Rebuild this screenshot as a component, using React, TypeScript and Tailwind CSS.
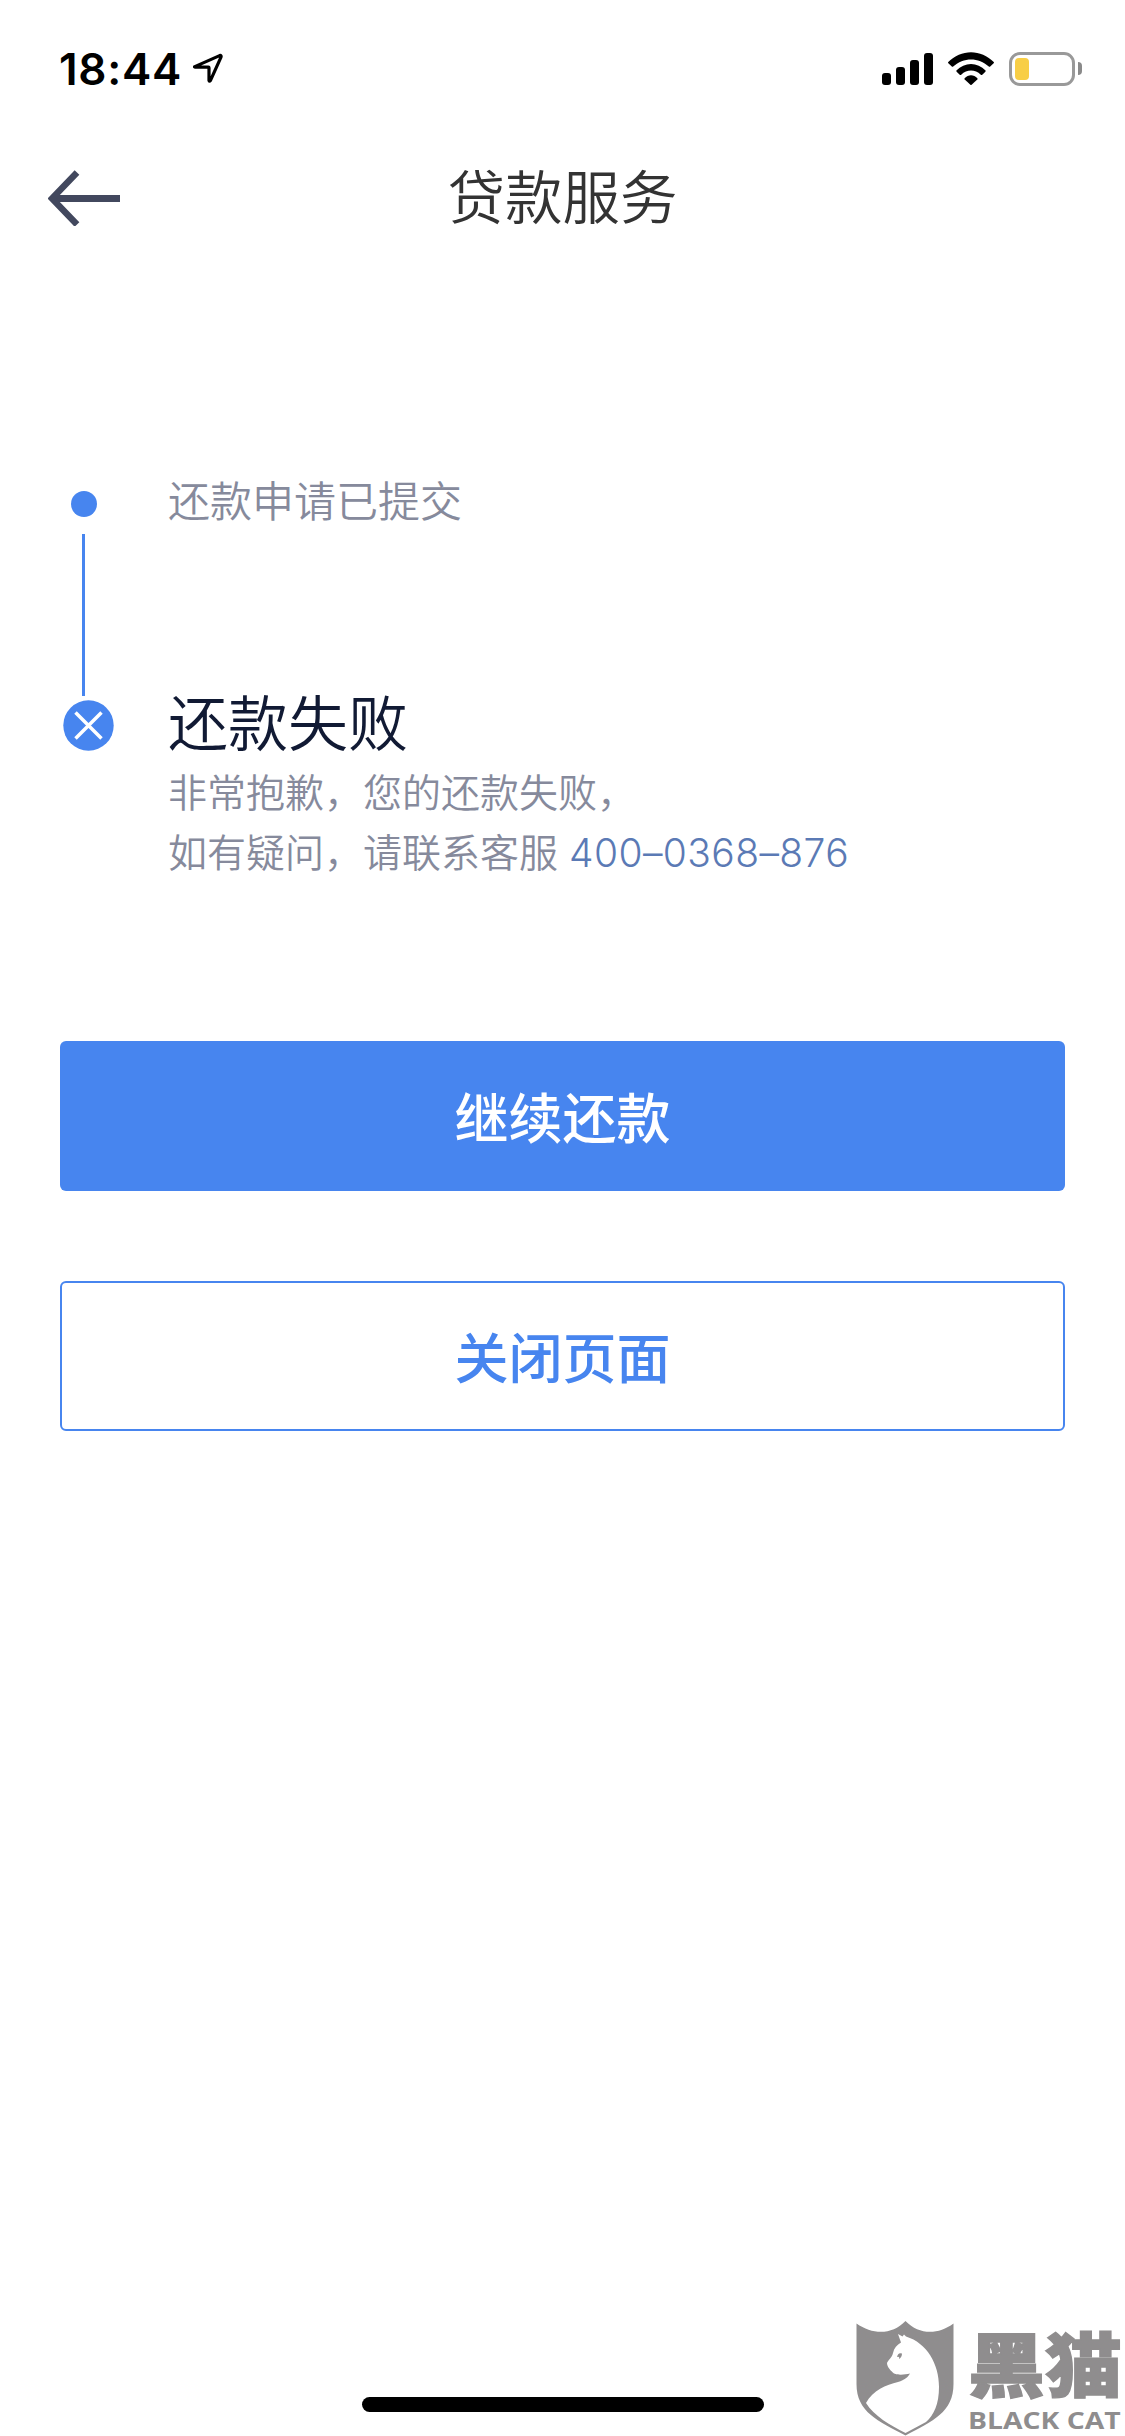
import React from "react";

function StatusBar() {
  return (
    <div className="flex h-[132px] items-start pl-[59px] pr-[43px] pt-[46px]">
      <span className="w-[134px] whitespace-nowrap font-['Inter','Liberation_Sans',sans-serif] text-[44px] font-semibold leading-[46px] tracking-[0.7px] text-black">
        18:44
      </span>
      <svg className="mt-[7px] h-[32px] w-[32px]" viewBox="0 0 32 32" fill="none">
        <path
          d="M1.8 13.6 26.6 2.6Q28.6 2 28 4.2L17.4 27.6Q16.3 29 16 27.4V14.8Q16 14.2 15.4 14.2H2.4Q1 14 1.8 13.6Z"
          stroke="#000"
          strokeWidth="3.2"
          strokeLinejoin="round"
        />
      </svg>
      <div className="ml-auto flex items-start">
        <div className="mt-[7px] flex h-[32px] items-end gap-[5px]">
          <i className="h-[12px] w-[9px] rounded-[3px] bg-black" />
          <i className="h-[18px] w-[9px] rounded-[3px] bg-black" />
          <i className="h-[25px] w-[9px] rounded-[3px] bg-black" />
          <i className="h-[32px] w-[9px] rounded-[3px] bg-black" />
        </div>
        <svg className="ml-[15px] mt-[6px] h-[34px] w-[46px]" viewBox="0 0 46 34">
          <path d="M0 10.2C13-3.2 33-3.2 46 10.2Q46 11 45.4 11.6L42.2 14.6Q41.4 15 40.8 14.6C30.5 5 15.500 5 5.200 14.600Q4.600 15 3.800 14.600L.6 11.600Q0 11 0 10.200Z" />
          <path d="M8.400 18.600C16.500 9.800 29.500 9.800 37.600 18.600Q37.800 19.200 37.400 19.700L34 22.900Q33.300 23.200 32.800 22.800C27 17.200 19 17.200 13.200 22.800Q12.700 23.200 12 22.900L8.600 19.700Q8.200 19.200 8.400 18.600Z" />
          <path d="M16.600 26.300C20.300 22.200 25.700 22.200 29.400 26.300Q29.800 26.900 29.300 27.500L23.600 32.800Q23 33.200 22.400 32.800L16.700 27.500Q16.200 26.900 16.600 26.300Z" />
        </svg>
        <div className="ml-[15px] mt-[6px] flex h-[34px] w-[66px] items-center rounded-[11px] border-[3px] border-[#999] pl-[3px]">
          <i className="h-[22px] w-[14px] rounded-[4px] bg-[#f8ce46]" />
        </div>
        <i className="ml-[3px] mt-[16px] h-[13px] w-[4px] rounded-r-full bg-[#8a8a8a]" />
      </div>
    </div>
  );
}

function Header() {
  return (
    <header className="flex h-[132px] items-center px-[48px]">
      <svg className="h-[56px] w-[72px]" viewBox="0 0 72 56" fill="none" stroke="#42485e">
        <path d="M72 28.500H7" strokeWidth="7" />
        <path d="M29 2.500 4 28.500 29 54.500" strokeWidth="6.500" />
      </svg>
      <h1 className="-mt-[8px] flex-1 pr-[72px] text-center text-[57.500px] font-[350] leading-[72px] text-[#333]">
        贷款服务
      </h1>
    </header>
  );
}

function Timeline() {
  return (
    <section className="mt-[208px] flex h-[420px] pl-[63px]">
      <div className="flex w-[105px] flex-col items-start pt-[19px]">
        <i className="ml-[8px] h-[26px] w-[26px] rounded-full bg-[#4785ef]" />
        <i className="ml-[19px] mt-[17px] h-[162px] w-[3px] bg-[#4785ef]" />
        <svg className="mt-[4px] h-[51px] w-[51px]" viewBox="0 0 51 51">
          <circle cx="25.500" cy="25.500" r="25.200" fill="#4785ef" />
          <path d="M12.500 12.500 38.500 38.500M38.500 12.500 12.500 38.500" stroke="#fff" strokeWidth="3.500" />
        </svg>
      </div>
      <div className="-mt-[3px]">
        <p className="h-[211px] text-[42px] font-[350] leading-[60px] text-[#868a9c]">还款申请已提交</p>
        <h2 className="text-[60px] font-[350] leading-[80px] text-[#111a34]">还款失败</h2>
        <p className="text-[39px] font-[350] leading-[60px] text-[#868a9c]">
          非常抱歉，您的还款失败，
          <br />
          如有疑问，请联系客服
          <span className="ml-[11px] font-['Inter','Liberation_Sans',sans-serif] text-[39px] font-[350] tracking-[0.4px] text-[#5b7ab5]">
            400–0368–876
          </span>
        </p>
      </div>
    </section>
  );
}

function Watermark() {
  return (
    <div className="absolute bottom-0 right-0 flex h-[118px] w-[270px] text-[#8f8d8e]">
      <svg className="ml-px mt-[3px] h-[115px] w-[98px]" viewBox="0 0 98 115">
        <path
          fill="#8f8d8e"
          d="M.500 2.500C17 14 36 14 49.500 0 63 14 82 14 97.500 2.500V63C97.500 91 77 100 49.500 114.500 22 100 .500 91 .500 63Z"
        />
        <path
          fill="#fff"
          d="M42 13 46.500 15.500 48 13.500 50 15.500C71 22 83 43 83 66 83 83 78 94 70 101L49.500 112C34 104 18 95 10 82 17 69 30 64 42 61 49 59 52 56 54 52.500 49 53.500 43 54.500 38 52.500 35 50 31 46 31 42 32 39 36 37 37 32 38 27 41 24 45 21.500Z"
        />
        <path fill="#8f8d8e" d="M41 36Q42 31 46 32.500 46 36 43 38Q44 35 41 36Z" />
      </svg>
      <div className="ml-[14px] flex w-[154px] flex-col">
        <div className="mt-[5px] h-[82px] origin-top-left scale-y-[0.920] whitespace-nowrap text-[77px] font-black leading-[84px] [-webkit-text-stroke:1.500px_#8f8d8e]">
          黑猫
        </div>
        <div className="mt-[3px] h-[24px] w-fit origin-left scale-x-[1.230] whitespace-nowrap font-['Open_Sans','Liberation_Sans',sans-serif] text-[23px] font-bold leading-[24px]">
          BLACK CAT
        </div>
      </div>
    </div>
  );
}

export default function App() {
  return (
    <main className="relative flex h-[2436px] w-[1125px] flex-col overflow-hidden bg-white font-['Noto_Sans_CJK_SC',sans-serif]">
      <StatusBar />
      <Header />
      <Timeline />
      <div className="mt-[149px] flex flex-col gap-[90px] px-[60px]">
        <button className="h-[150px] rounded-[6px] bg-[#4785ef] pb-px text-[54px] font-medium leading-[80px] text-white">
          继续还款
        </button>
        <button className="h-[150px] rounded-[6px] border-2 border-[#4785ef] pb-px text-[54px] font-medium leading-[80px] text-[#4785ef]">
          关闭页面
        </button>
      </div>
      <div className="mb-[24px] ml-[362px] mt-auto h-[15px] w-[402px] rounded-full bg-black" />
      <Watermark />
    </main>
  );
}
